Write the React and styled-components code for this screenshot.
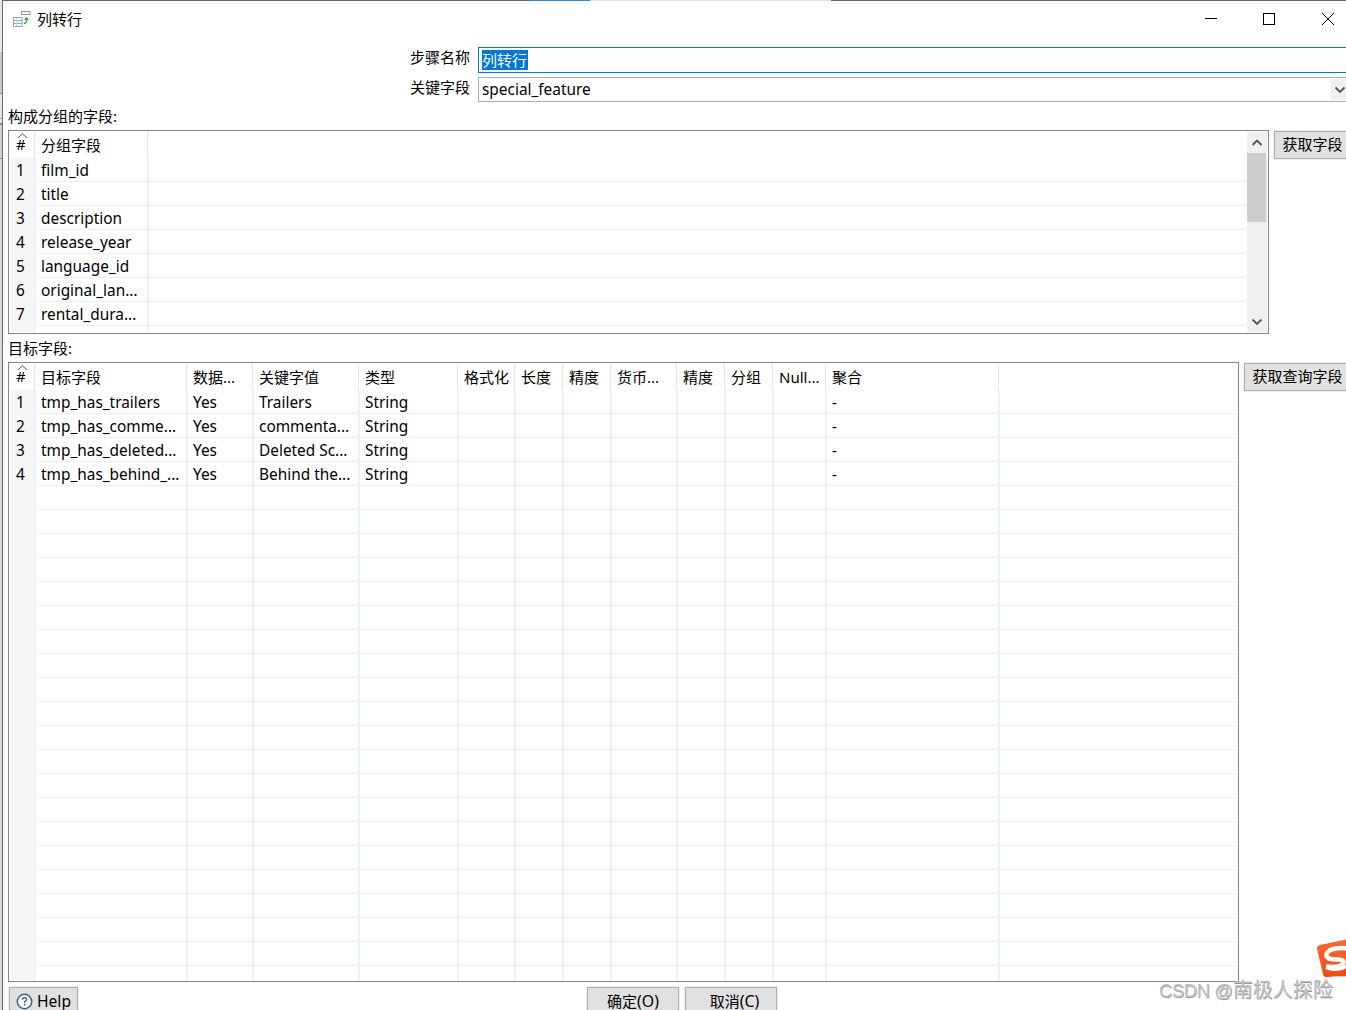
import styled, { createGlobalStyle } from "styled-components"

const GlobalStyle = createGlobalStyle`
    * {
        box-sizing: border-box;
    }

    body {
        margin: 0;
        overflow: hidden;
        background-color: #fff;
        color: #000;
        font-family: "Noto Sans", "Noto Sans CJK SC", sans-serif;
        font-size: 15px;
    }
`

const Screen = styled.div`
    position: relative;
    display: flex;
    width: 1346px;
    height: 1010px;
    overflow: hidden;
`

const Backdrop = styled.div`
    display: flex;
    flex-direction: column;
    flex: none;
    width: 2px;
    background-color: #d9d9d9;
`

const BackdropPart = styled.div`
    height: ${(p) => p.$height}px;
    background-color: ${(p) => p.$color};
`

const Dialog = styled.div`
    display: flex;
    flex-direction: column;
    flex: none;
    width: 1400px;
    border-left: 1px solid #6b6b6b;
    background-color: #fff;
`

const TopEdge = styled.div`
    display: flex;
    flex: none;
    height: 1px;
    background-color: #666;
`

const EdgePart = styled.div`
    width: ${(p) => p.$width}px;
    background-color: ${(p) => p.$color};
`

const TitleBar = styled.div`
    display: flex;
    justify-content: space-between;
    flex: none;
    width: 1343px;
    height: 46px;
    padding: 9px 0 0 9px;
`

const Title = styled.div`
    display: flex;
    gap: 6px;
    line-height: 18px;
`

const WindowButtons = styled.div`
    display: flex;
    gap: 44px;
    padding: 2px 11px 0 0;

    & svg:last-child {
        margin-left: 1px;
    }
`

const Form = styled.div`
    display: flex;
    flex-direction: column;
    flex: none;
    gap: 4px;
    height: 59px;
    padding-left: 406px;
`

const FormRow = styled.div`
    display: flex;
    align-items: flex-start;
`

const Label = styled.label`
    width: 69px;
    padding-left: 1px;
    line-height: 20px;
`

const Input = styled.div`
    display: flex;
    align-items: flex-start;
    width: 900px;
    height: 26px;
    padding: 2px 2px 2px 3px;
    border: 1px solid #0078d7;
    background-color: #fff;

    & span {
        height: 20px;
        padding: 0 1px 0 0;
        background-color: #0078d7;
        color: #fff;
        line-height: 20px;
    }
`

const Select = styled.div`
    display: flex;
    justify-content: space-between;
    width: 875px;
    height: 25px;
    padding: 1px 1px 1px 3px;
    border: 1px solid #acacac;
    font-size: 15.4px;
    line-height: 21px;
`

const SelectArrow = styled.div`
    width: 20px;
    height: 21px;
    padding: 6px 0 0 3px;
    background-color: #f0f0f0;
    line-height: 0;
`

const SectionLabel = styled.div`
    flex: none;
    height: ${(p) => p.$height}px;
    padding-top: ${(p) => p.$top}px;
    padding-left: 5px;
    line-height: 20px;
`

const Section = styled.div`
    display: flex;
    align-items: flex-start;
    flex: none;
    gap: 5px;
    padding-left: 5px;
`

const TableBox = styled.div`
    display: flex;
    width: ${(p) => p.$width}px;
    height: ${(p) => p.$height}px;
    padding: 1px;
    overflow: hidden;
    border: 1px solid #828790;
`

const TableBody = styled.div`
    flex: 1;
    overflow: hidden;
`

const HeadRow = styled.div`
    display: flex;
    height: 26px;
`

const HeadCell = styled.div`
    position: relative;
    flex: none;
    width: ${(p) => p.$width}px;
    padding-left: ${(p) => (p.$index ? 6 : 5)}px;
    overflow: hidden;
    box-shadow: inset -1px 0 #fff, inset -2px 0 #e5e5e5;
    line-height: ${(p) => (p.$index ? 25 : 26)}px;
    white-space: nowrap;
`

const SortMark = styled.svg`
    position: absolute;
    top: 1px;
    left: 7px;
`

const Row = styled.div`
    display: flex;
    height: 24px;
`

const IndexCell = styled.div`
    flex: none;
    width: 26px;
    padding-left: 6px;
    background-color: #f6f6f6;
    box-shadow: inset -2px 0 #eaf1fb;
    font-size: 15.4px;
    line-height: 26px;
`

const Cell = styled.div`
    flex: none;
    width: ${(p) => p.$width}px;
    padding-left: 5px;
    overflow: hidden;
    box-shadow: inset -2px 0 #eaf1fb, inset 0 -1px #efefef;
    font-size: 15.4px;
    line-height: 26px;
    white-space: nowrap;
`

const RestCell = styled.div`
    flex: 1;
    margin-right: 1px;
    box-shadow: inset 0 -1px #efefef;
`

const Scrollbar = styled.div`
    display: flex;
    flex-direction: column;
    align-items: center;
    flex: none;
    width: 20px;
    background-color: #f0f0f0;
`

const ScrollButton = styled.div`
    width: 20px;
    height: 21px;
    padding: 6px 0 0 3.5px;
    line-height: 0;
`

const Thumb = styled.div`
    align-self: flex-start;
    width: 19px;
    height: 69px;
    margin-bottom: auto;
    background-color: #cdcdcd;
`

const Button = styled.div`
    flex: none;
    display: flex;
    align-items: center;
    justify-content: center;
    gap: 4px;
    width: ${(p) => p.$width}px;
    height: 28px;
    padding: 0 1px 2px 0;
    border: 1px solid #adadad;
    outline: 1px solid #f0f0f0;
    background-color: #e1e1e1;
    line-height: 16px;
    white-space: nowrap;
`

const Footer = styled.div`
    display: flex;
    flex: none;
    padding: 5px 0 0 6px;

    & .help {
        padding: 0;
        font-size: 15.6px;
    }
    & .confirm {
        margin-left: 509px;
        padding: 0 0 1px;
    }
    & .cancel {
        margin-left: 6px;
        padding: 0 0 1px 7px;
    }
    & .latin {
        margin-left: -4px;
        font-size: 15.8px;
    }
`

const SideButton = styled.div`
    padding-top: 1px;
`

const SogouBadge = styled.svg`
    position: absolute;
    top: 936px;
    left: 1314px;
`

const Watermark = styled.div`
    position: absolute;
    top: 976px;
    left: 1159px;
    color: #c4c4c4;
    font-family: "Liberation Sans", "Noto Sans CJK SC", sans-serif;
    font-size: 20px;
    line-height: 28px;
    text-shadow: 0.5px 0.5px 0 #979797;
    white-space: nowrap;

    & span {
        font-size: 18.5px;
        letter-spacing: -0.45px;
    }
`

const groupColumns = [
    { title: "分组字段", width: 113 },
]

const groupRows = [
    ["film_id"],
    ["title"],
    ["description"],
    ["release_year"],
    ["language_id"],
    ["original_lan..."],
    ["rental_dura..."],
    [],
]

const targetColumns = [
    { title: "目标字段", width: 152 },
    { title: "数据...", width: 66 },
    { title: "关键字值", width: 106 },
    { title: "类型", width: 99 },
    { title: "格式化", width: 57 },
    { title: "长度", width: 48 },
    { title: "精度", width: 48 },
    { title: "货币...", width: 66 },
    { title: "精度", width: 48 },
    { title: "分组", width: 48 },
    { title: "Null...", width: 53 },
    { title: "聚合", width: 173 },
]

const targetRows = [
    ["tmp_has_trailers", "Yes", "Trailers", "String", "", "", "", "", "", "", "", "-"],
    ["tmp_has_comme...", "Yes", "commenta...", "String", "", "", "", "", "", "", "", "-"],
    ["tmp_has_deleted...", "Yes", "Deleted Sc...", "String", "", "", "", "", "", "", "", "-"],
    ["tmp_has_behind_...", "Yes", "Behind the...", "String", "", "", "", "", "", "", "", "-"],
    ...Array.from({ length: 21 }, () => []),
]

const Chevron = ({ up }) => (
    <svg width="12" height="10" viewBox="0 0 12 10">
        <path
            d={up ? "M1.5 7 L6 2.5 L10.5 7" : "M1.5 2.5 L6 7 L10.5 2.5"}
            fill="none"
            stroke="#505050"
            strokeWidth="1.8"
        />
    </svg>
)

const DataTable = ({ columns, rows, width, height, scroll }) => (
    <TableBox $width={width} $height={height}>
        <TableBody>
            <HeadRow>
                <HeadCell $width={26} $index>
                    <SortMark width="11" height="6" viewBox="0 0 11 6">
                        <path d="M1 5 L5.5 0.8 L10 5" fill="none" stroke="#5a5a5a" />
                    </SortMark>
                    #
                </HeadCell>
                {columns.map((column, i) => (
                    <HeadCell key={i} $width={column.width}>{column.title}</HeadCell>
                ))}
            </HeadRow>
            {rows.map((row, i) => (
                <Row key={i}>
                    <IndexCell>{row.length > 0 && i + 1}</IndexCell>
                    {columns.map((column, j) => (
                        <Cell key={j} $width={column.width}>{row[j]}</Cell>
                    ))}
                    <RestCell />
                </Row>
            ))}
        </TableBody>
        {scroll && (
            <Scrollbar>
                <ScrollButton><Chevron up /></ScrollButton>
                <Thumb />
                <ScrollButton><Chevron /></ScrollButton>
            </Scrollbar>
        )}
    </TableBox>
)

const StepIcon = () => (
    <svg width="19" height="18" viewBox="0 0 19 18">
        <rect x="9.5" y="1.5" width="8.5" height="3" fill="#fff" stroke="#7f9bad" />
        <path
            d="M1 7.5 H10.5 M1 10.5 H10.5 M1 13.5 H10.5 M1 16.5 H10.5 M1.5 8 V16 M10 8 V16"
            fill="none"
            stroke="#8fa6b5"
        />
        <path d="M4.5 8 V16" stroke="#c9d5dc" />
        <path d="M12 13.5 Q14.5 13.5 14.5 9.5" fill="none" stroke="#2fb03a" strokeWidth="1.5" />
        <path d="M12 10 L14.7 6.8 L17 10 Z" fill="#2fb03a" />
    </svg>
)

const App = () => {
    return (
        <>
            <GlobalStyle />
            <Screen>
                <Backdrop>
                    <BackdropPart $height={52} $color="#e6e6e6" />
                    <BackdropPart $height={41} $color="#c8c8c8" />
                    <BackdropPart $height={1} $color="#8a8a8a" />
                    <BackdropPart $height={24} $color="#e6e6e6" />
                    <BackdropPart $height={1} $color="#a0a0a0" />
                    <BackdropPart $height={4} $color="#e6e6e6" />
                    <BackdropPart $height={2} $color="#8a8a8a" />
                    <BackdropPart $height={33} $color="#d0d0d0" />
                    <BackdropPart $height={1} $color="#8a8a8a" />
                </Backdrop>
                <Dialog>
                    <TopEdge>
                        <EdgePart $width={527} $color="#666" />
                        <EdgePart $width={60} $color="#2a8dd4" />
                        <EdgePart $width={241} $color="#e4e4e4" />
                    </TopEdge>
                    <TitleBar>
                        <Title>
                            <StepIcon />
                            列转行
                        </Title>
                        <WindowButtons>
                            <svg width="14" height="14" viewBox="0 0 14 14">
                                <path d="M1 6.5 H13" stroke="#000" />
                            </svg>
                            <svg width="14" height="14" viewBox="0 0 14 14">
                                <rect x="1.5" y="1.5" width="11" height="11" fill="none" stroke="#000" />
                            </svg>
                            <svg width="14" height="14" viewBox="0 0 14 14">
                                <path d="M1 1 L13 13 M13 1 L1 13" stroke="#000" />
                            </svg>
                        </WindowButtons>
                    </TitleBar>
                    <Form>
                        <FormRow>
                            <Label>步骤名称</Label>
                            <Input><span>列转行</span></Input>
                        </FormRow>
                        <FormRow>
                            <Label>关键字段</Label>
                            <Select>
                                special_feature
                                <SelectArrow><Chevron /></SelectArrow>
                            </Select>
                        </FormRow>
                    </Form>
                    <SectionLabel $height={24} $top={0}>构成分组的字段:</SectionLabel>
                    <Section>
                        <DataTable columns={groupColumns} rows={groupRows} width={1261} height={204} scroll />
                        <SideButton><Button $width={78}>获取字段</Button></SideButton>
                    </Section>
                    <SectionLabel $height={28} $top={4}>目标字段:</SectionLabel>
                    <Section>
                        <DataTable columns={targetColumns} rows={targetRows} width={1231} height={620} />
                        <SideButton><Button $width={108}>获取查询字段</Button></SideButton>
                    </Section>
                    <Footer>
                        <Button className="help" $width={69}>
                            <svg width="17" height="17" viewBox="0 0 17 17">
                                <circle cx="8.5" cy="8.5" r="7.2" fill="#fff" stroke="#3f6484" strokeWidth="1.5" />
                                <path d="M6.3 6.8 Q6.4 4.8 8.5 4.8 Q10.7 4.8 10.7 6.6 Q10.7 7.7 8.6 8.7 V10" fill="none" stroke="#3f6484" strokeWidth="1.4" />
                                <rect x="7.8" y="11" width="1.6" height="1.6" fill="#3f6484" />
                            </svg>
                            Help
                        </Button>
                        <Button className="confirm" $width={92}>确定<span className="latin">(O)</span></Button>
                        <Button className="cancel" $width={92}>取消<span className="latin">(C)</span></Button>
                    </Footer>
                </Dialog>
                <SogouBadge width="32" height="44" viewBox="0 0 32 44">
                    <defs>
                        <linearGradient id="badge" x1="0" y1="0" x2="0" y2="1">
                            <stop offset="0" stopColor="#f8693a" />
                            <stop offset="1" stopColor="#ee4b12" />
                        </linearGradient>
                    </defs>
                    <path d="M6 9 L32 3.5 V40 L12 41 Q9.5 41 9 38 L3 13 Q2.5 10 6 9 Z" fill="url(#badge)" />
                    <path
                        d="M34 12.5 Q22 11 15.5 14.5 Q9.5 19 15 22.5 Q18 23.5 25 23.5 Q31 24 29 27.5 Q26 32 12 30.5 M12 31 Q22 35 32 30"
                        fill="none"
                        stroke="#fff"
                        strokeWidth="4.5"
                    />
                    <path d="M19 40.5 H32" stroke="#b9cdee" />
                </SogouBadge>
                <Watermark><span>CSDN @</span>南极人探险</Watermark>
            </Screen>
        </>
    )
}

export default App
